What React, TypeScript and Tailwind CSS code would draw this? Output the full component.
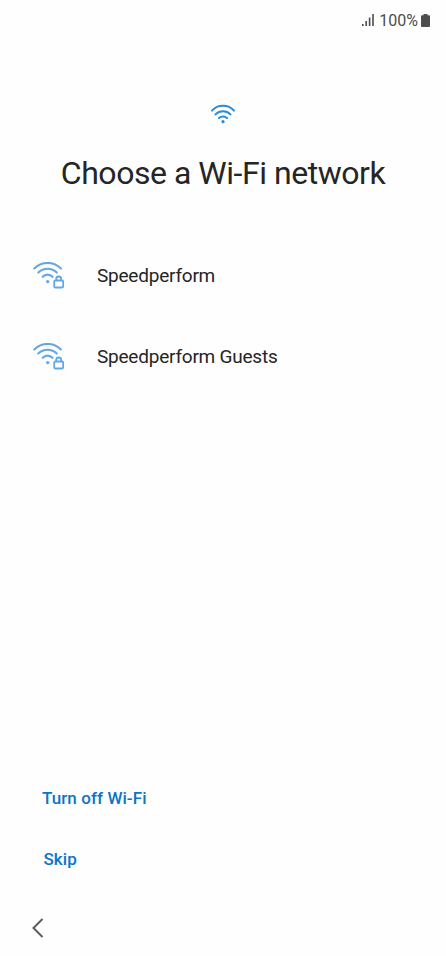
interface Network {
  name: string
}

const networks: Network[] = [{ name: 'Speedperform' }, { name: 'Speedperform Guests' }]

function StatusBar() {
  return (
    <div className="flex h-10 items-center justify-end pr-4 text-[#4d4d4d]">
      <svg className="mr-[5px] h-3 w-3" viewBox="0 0 12 12" fill="currentColor">
        <rect x="0" y="10" width="1.6" height="2" />
        <rect x="3.4" y="7" width="1.6" height="5" />
        <rect x="6.8" y="3.5" width="1.6" height="8.5" />
        <rect x="10.2" y="0" width="1.6" height="12" />
      </svg>
      <span className="pt-px text-base leading-none">100%</span>
      <svg className="ml-[3px] h-[13px] w-[9px]" viewBox="0 0 9 13" fill="currentColor">
        <path d="M2.5 0h4v1.3H8a1 1 0 0 1 1 1V12a1 1 0 0 1-1 1H1a1 1 0 0 1-1-1V2.3a1 1 0 0 1 1-1h1.5z" />
      </svg>
    </div>
  )
}

function WifiIcon() {
  return (
    <svg className="h-5 w-[26px]" viewBox="0 0 26 20" fill="none" stroke="#2a8bd8" strokeWidth="2" strokeLinecap="round">
      <path d="M2 6.6A15 15 0 0 1 24 6.6" />
      <path d="M5.5 10.4A10.5 10.5 0 0 1 20.5 10.400" />
      <path d="M9 14A5.800 5.800 0 0 1 17 14" />
      <circle cx="13" cy="17.7" r="1.6" fill="#2a8bd8" stroke="none" />
    </svg>
  )
}

function LockedWifiIcon() {
  return (
    <svg className="h-[29px] w-8" viewBox="0 0 32 29" fill="none" stroke="#62a8e8" strokeWidth="2.1" strokeLinecap="round">
      <path d="M2.3 6.4A19 19 0 0 1 28.900 6.400" />
      <path d="M6.3 10.6A13 13 0 0 1 24.800 10.600" />
      <path d="M10.7 14.800A6.600 6.600 0 0 1 20.500 14.800" />
      <circle cx="15.7" cy="19.6" r="1.7" fill="#62a8e8" stroke="none" />
      <rect x="22.200" y="18.500" width="9" height="7" rx="1.300" strokeWidth="1.800" />
      <path d="M24.200 18.300v-1.300a2.500 2.500 0 0 1 5 0v1.300" strokeWidth="1.800" />
    </svg>
  )
}

export default function App() {
  return (
    <div className="flex h-[956px] w-[446px] flex-col bg-[#fefefe] font-['Roboto',sans-serif] text-[#252525]">
      <StatusBar />
      <header className="flex flex-col items-center pt-16">
        <WifiIcon />
        <h1 className="mt-7 text-[32px] leading-[42px] tracking-[-0.47px] whitespace-nowrap">Choose a Wi-Fi network</h1>
      </header>
      <ul className="mt-[42px]">
        {networks.map(({ name }) => (
          <li key={name} className="flex h-[81px] items-center pl-8">
            <LockedWifiIcon />
            <span className="ml-[33px] text-[19px] tracking-[-0.22px]">{name}</span>
          </li>
        ))}
      </ul>
      <div className="mt-auto flex flex-col items-start text-[17px] font-medium tracking-[0.08px] text-[#0a75c8]">
        <button className="ml-[42px] h-[61px]">Turn off Wi-Fi</button>
        <button className="ml-[43.5px] h-[61px]">Skip</button>
      </div>
      <nav className="flex h-[66px] pt-7 pl-8">
        <svg className="h-5 w-3" viewBox="0 0 12 20" fill="none" stroke="#5c5c5c" strokeWidth="2">
          <path d="M10.5 1 1.5 10l9 9" />
        </svg>
      </nav>
    </div>
  )
}
